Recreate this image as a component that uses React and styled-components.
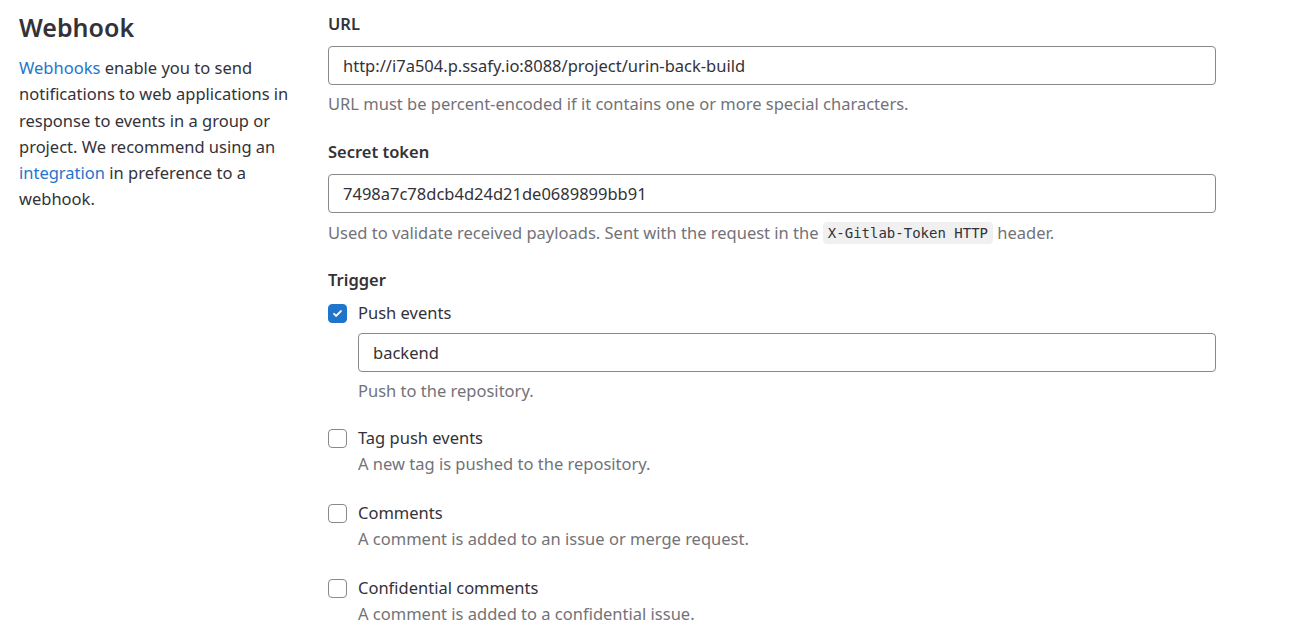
import React from "react"
import styled, { createGlobalStyle } from "styled-components"

const GlobalStyle = createGlobalStyle`
  body {
    margin: 0;
    background: #fff;
    font-family: "Noto Sans", "Open Sans", sans-serif;
    color: #333238;
  }
`

const Page = styled.div`
  display: flex;
  padding: 0 19px;
`

const Intro = styled.div`
  width: 280px;
  flex-shrink: 0;
  margin-right: 29px;
`

const Title = styled.h2`
  margin: 11px 0 12px;
  font-size: 25px;
  line-height: 32px;
  font-weight: 600;
  color: #333238;
`

const Text = styled.p`
  margin: 0;
  font-size: 16.5px;
  line-height: 26.3px;
`

const Link = styled.a`
  color: #1f75cb;
  text-decoration: none;
`

const Form = styled.div`
  width: 888px;
`

const Group = styled.div`
  margin-top: ${(props) => props.top ?? 0}px;
`

const Label = styled.div`
  font-size: 16.5px;
  line-height: 26px;
  font-weight: 600;
  margin-bottom: ${(props) => props.bottom ?? 9}px;
`

const Input = styled.input`
  display: block;
  box-sizing: border-box;
  width: ${(props) => (props.indent ? "calc(100% - 30px)" : "100%")};
  margin-left: ${(props) => (props.indent ? 30 : 0)}px;
  height: 39px;
  padding: 0 14px;
  border: 1px solid #89888d;
  border-radius: 4px;
  font-family: inherit;
  font-size: 16.5px;
  color: #333238;
  background: #fff;
  outline: none;
`

const Help = styled.div`
  font-size: 16.5px;
  line-height: 26px;
  color: #737278;
  margin-top: ${(props) => props.top ?? 6}px;
  margin-left: ${(props) => (props.indent ? 30 : 0)}px;
`

const Code = styled.code`
  display: inline-block;
  font-family: "DejaVu Sans Mono", "Liberation Mono", monospace;
  font-size: 14px;
  line-height: 22px;
  padding: 0 5px;
  background: #f0f0f0;
  color: #333238;
  border-radius: 4px;
  vertical-align: 1px;
`

const CheckRow = styled.label`
  display: flex;
  align-items: center;
  gap: 11px;
  font-size: 16.5px;
  line-height: 26px;
`

const Box = styled.span`
  box-sizing: border-box;
  width: 19px;
  height: 19px;
  border-radius: 4px;
  border: 1px solid ${(props) => (props.checked ? "#1f75cb" : "#89888d")};
  background: ${(props) => (props.checked ? "#1f75cb" : "#fff")};
  display: flex;
  align-items: center;
  justify-content: center;
  flex-shrink: 0;
`

const Trigger = styled.div`
  margin-top: ${(props) => props.top ?? 0}px;
`

const Checkbox = ({ checked, children }) => (
  <CheckRow>
    <Box checked={checked}>
      {checked && (
        <svg width="11" height="11" viewBox="0 0 16 16">
          <path
            d="M3 8.5l3 3 7-7"
            fill="none"
            stroke="#fff"
            strokeWidth="2.8"
            strokeLinecap="round"
            strokeLinejoin="round"
          />
        </svg>
      )}
    </Box>
    {children}
  </CheckRow>
)

const triggers = [
  { name: "Tag push events", desc: "A new tag is pushed to the repository." },
  { name: "Comments", desc: "A comment is added to an issue or merge request." },
  {
    name: "Confidential comments",
    desc: "A comment is added to a confidential issue.",
  },
]

const App = () => {
  return (
    <>
      <GlobalStyle />
      <Page>
        <Intro>
          <Title>Webhook</Title>
          <Text>
            <Link href="#">Webhooks</Link> enable you to send notifications to
            web applications in response to events in a group or project. We
            recommend using an <Link href="#">integration</Link> in preference
            to a webhook.
          </Text>
        </Intro>
        <Form>
          <Group top={11}>
            <Label>URL</Label>
            <Input
              readOnly
              value="http://i7a504.p.ssafy.io:8088/project/urin-back-build"
            />
            <Help>
              URL must be percent-encoded if it contains one or more special
              characters.
            </Help>
          </Group>
          <Group top={22}>
            <Label>Secret token</Label>
            <Input readOnly value="7498a7c78dcb4d24d21de0689899bb91" />
            <Help top={7}>
              Used to validate received payloads. Sent with the request in the{" "}
              <Code>X-Gitlab-Token HTTP</Code> header.
            </Help>
          </Group>
          <Group top={21}>
            <Label bottom={7}>Trigger</Label>
            <Checkbox checked>Push events</Checkbox>
            <Group top={7}>
              <Input indent readOnly value="backend" />
              <Help indent>Push to the repository.</Help>
            </Group>
            {triggers.map((t, i) => (
              <Trigger key={t.name} top={i === 0 ? 21 : 23}>
                <Checkbox>{t.name}</Checkbox>
                <Help indent top={0}>
                  {t.desc}
                </Help>
              </Trigger>
            ))}
          </Group>
        </Form>
      </Page>
    </>
  )
}

export default App
